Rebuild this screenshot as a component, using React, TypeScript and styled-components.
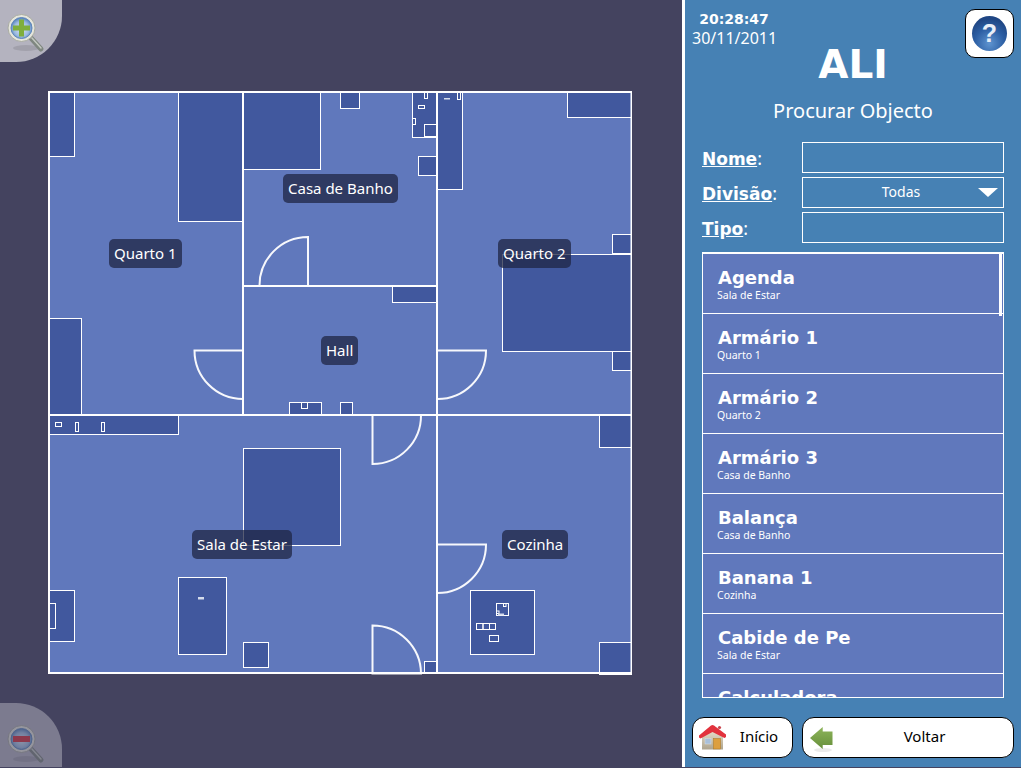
import styled, { createGlobalStyle } from 'styled-components'

const GlobalStyle = createGlobalStyle`
  html, body {
    margin: 0;
    background: #44435f;
    overflow: hidden;
  }
  body {
    font-family: "Noto Sans", "Open Sans", sans-serif;
    color: #fff;
  }
`

const Page = styled.div`
  display: flex;
  width: 1021px;
  height: 767px;
`

const MapArea = styled.main`
  position: relative;
  width: 682px;
  flex-shrink: 0;
`

const PlanSvg = styled.svg`
  display: block;
`

const ZoomTab = styled.button<{ $bottom?: boolean }>`
  position: absolute;
  left: 0;
  ${({ $bottom }) => ($bottom ? 'bottom: 0;' : 'top: 0;')}
  width: 62px;
  height: ${({ $bottom }) => ($bottom ? '64px' : '62px')};
  padding: ${({ $bottom }) => ($bottom ? '17px 0 0 5px' : '3px 0 0 5px')};
  border: 0;
  background: rgba(255, 255, 255, 0.6);
  opacity: ${({ $bottom }) => ($bottom ? 0.5 : 1)};
  ${({ $bottom }) =>
    $bottom ? 'border-top-right-radius: 46px;' : 'border-bottom-right-radius: 46px;'}
  text-align: left;

  svg {
    display: block;
  }
`

const RoomLabel = styled.span<{ $x: number; $y: number }>`
  position: absolute;
  left: ${({ $x }) => $x}px;
  top: ${({ $y }) => $y}px;
  height: 29px;
  padding: 0 5px;
  border-radius: 5px;
  background: rgba(31, 37, 68, 0.75);
  font-size: 15px;
  line-height: 29px;
  white-space: nowrap;
`

const Panel = styled.aside`
  display: flex;
  flex-direction: column;
  flex: 1;
  border-left: 3px solid #fff;
  background: #4681b4;
`

const Header = styled.header`
  display: grid;
  grid-template-columns: 1fr auto 1fr;
  padding: 9px 7px 0;
`

const Clock = styled.div`
  width: 84px;
  padding-top: 2px;
  text-align: center;
`

const Time = styled.div`
  font-family: "DejaVu Sans", sans-serif;
  font-size: 14px;
  font-weight: 700;
  line-height: 17px;
`

const DateText = styled.div`
  font-size: 16px;
  line-height: 20px;
`

const AppName = styled.h1`
  margin: 33px 0 0;
  font-family: "DejaVu Sans", sans-serif;
  font-size: 39px;
  font-weight: 700;
  line-height: 46px;
`

const HelpButton = styled.button`
  justify-self: end;
  display: flex;
  align-items: center;
  justify-content: center;
  width: 49px;
  height: 49px;
  padding: 0;
  border: 1px solid #000;
  border-radius: 10px;
  background: #fff;
`

const Subtitle = styled.h2`
  margin: 10px 0 0;
  height: 26px;
  font-size: 20px;
  font-weight: 400;
  line-height: 26px;
  text-align: center;
`

const Form = styled.form`
  display: grid;
  grid-template-columns: 100px 1fr;
  grid-auto-rows: 31px;
  row-gap: 4px;
  margin: 18px 17px 0;
`

const FieldLabel = styled.label`
  align-self: center;
  font-size: 18px;

  u {
    font-family: "DejaVu Sans", sans-serif;
    font-size: 17px;
    font-weight: 700;
  }
`

const TextField = styled.div`
  border: 1px solid #fff;
`

const SelectField = styled(TextField)`
  position: relative;
  padding-right: 4px;
  font-size: 14px;
  line-height: 27px;
  text-align: center;

  &::after {
    content: '';
    position: absolute;
    right: 5px;
    top: 10px;
    border-left: 10px solid transparent;
    border-right: 10px solid transparent;
    border-top: 9px solid #fff;
  }
`

const List = styled.div`
  position: relative;
  margin: 9px 17px 0;
  height: 443px;
  border: 1px solid #fff;
  border-top-width: 2px;
  background: #6078bc;
  overflow: hidden;
`

const ScrollThumb = styled.div`
  position: absolute;
  top: 0;
  right: 1px;
  width: 3px;
  height: 62px;
  background: #fff;
`

const ListItem = styled.div`
  box-sizing: border-box;
  height: 60px;
  padding: 12px 0 0 15px;
  border-bottom: 1px solid #fff;
`

const ItemName = styled.div`
  font-family: "DejaVu Sans", sans-serif;
  font-size: 18px;
  font-weight: 700;
  line-height: 23px;
`

const ItemRoom = styled.div`
  margin-left: -1px;
  font-size: 10.5px;
  line-height: 13px;
`

const Footer = styled.footer`
  display: flex;
  gap: 9px;
  margin-top: 19px;
  padding: 0 7px;
`

const NavButton = styled.button<{ $wide?: boolean }>`
  display: flex;
  align-items: center;
  box-sizing: border-box;
  ${({ $wide }) => ($wide ? 'flex: 1; padding-left: 7px;' : 'width: 101px; padding-left: 6px;')}
  height: 41px;
  padding-right: 0;
  border: 1px solid #000;
  border-radius: 12px;
  background: #fff;
  color: #000;
  font-family: inherit;
  font-size: 15px;

  span {
    flex: 1;
    padding: 0 0 3px ${({ $wide }) => ($wide ? '3px' : '0')};
    text-align: center;
  }
`

const rooms = [
  { name: 'Quarto 1', x: 109, y: 239 },
  { name: 'Casa de Banho', x: 283, y: 174 },
  { name: 'Hall', x: 321, y: 336 },
  { name: 'Quarto 2', x: 498, y: 239 },
  { name: 'Sala de Estar', x: 192, y: 530 },
  { name: 'Cozinha', x: 502, y: 530 },
]

const objects = [
  { name: 'Agenda', room: 'Sala de Estar' },
  { name: 'Armário 1', room: 'Quarto 1' },
  { name: 'Armário 2', room: 'Quarto 2' },
  { name: 'Armário 3', room: 'Casa de Banho' },
  { name: 'Balança', room: 'Casa de Banho' },
  { name: 'Banana 1', room: 'Cozinha' },
  { name: 'Cabide de Pe', room: 'Sala de Estar' },
  { name: 'Calculadora', room: 'Sala de Estar' },
]

// x, y, width, height of the furniture on the plan
const furniture = [
  [48.5, 91.5, 26, 65],
  [178.5, 91.5, 64.5, 130],
  [243.5, 91.5, 77, 78],
  [340.5, 91.5, 19, 17],
  [412.5, 91.5, 25, 46],
  [424.5, 124.5, 12, 12],
  [418.5, 156.5, 19, 19],
  [437.5, 91.5, 25, 98],
  [567.5, 91.5, 64, 26],
  [612.5, 234.5, 19, 19],
  [502.5, 254.5, 129, 97],
  [612.5, 351.5, 19, 19],
  [392.5, 286.5, 45, 16],
  [289.5, 402.5, 32, 13],
  [340.5, 402.5, 12, 13],
  [48.5, 318.5, 33, 97],
  [48.5, 415.5, 130, 19],
  [243.5, 448.5, 97, 97],
  [178.5, 577.5, 48, 77],
  [243.5, 642.5, 25, 25],
  [48.5, 590.5, 26, 51],
  [599.5, 415.5, 32, 32],
  [599.5, 642.5, 32, 32],
  [470.5, 590.5, 64, 64],
  [424.5, 661.5, 12, 12],
]

const smallParts = [
  [424.5, 92.5, 3, 6],
  [418.5, 105.5, 6, 3],
  [412.5, 118.5, 3, 6],
  [457.5, 92.5, 3, 7],
  [301.5, 402.5, 6, 6],
  [55.5, 422.5, 6, 4],
  [75.5, 422.5, 3, 9],
  [101.5, 422.5, 3, 9],
  [48.5, 603.5, 7, 25],
  [496.5, 603.5, 12, 12],
  [503.5, 603.5, 2.5, 3],
  [496.5, 611, 2.5, 2.5],
  [476.5, 623.5, 6.5, 6],
  [483, 623.5, 6.5, 6],
  [489.5, 623.5, 6, 6],
  [489.5, 635.5, 9, 6],
]

const dashes = [
  [444, 98, 6, 1.5],
  [198, 597, 6, 2.5],
  [498, 613.5, 6, 2],
]

const doors = [
  'M308 286V237A48.5 48.5 0 0 0 259.5 286',
  'M243 350.5H194.5A48.5 48.5 0 0 0 243 399',
  'M437 350.5H486A48.5 48.5 0 0 1 437 399',
  'M372.5 415V464A48.5 48.5 0 0 0 421 415',
  'M437 544.5H486A48.5 48.5 0 0 1 437 593',
  'M372.5 673.5V625.5A48.5 48.5 0 0 1 421 673.5Z',
]

function FloorPlan() {
  return (
    <PlanSvg width={682} height={767} viewBox="0 0 682 767">
      <rect x={49} y={92} width={582} height={581} fill="#6078bc" />
      {furniture.map(([x, y, w, h]) => (
        <rect key={`${x}-${y}`} x={x} y={y} width={w} height={h} fill="#41589e" stroke="#fff" />
      ))}
      {smallParts.map(([x, y, w, h]) => (
        <rect key={`${x}-${y}`} x={x} y={y} width={w} height={h} fill="none" stroke="#fff" />
      ))}
      {dashes.map(([x, y, w, h]) => (
        <rect key={`${x}-${y}`} x={x} y={y} width={w} height={h} fill="#d5dcec" />
      ))}
      {doors.map((d) => (
        <path key={d} d={d} fill="none" stroke="#fff" strokeWidth={2} strokeOpacity={0.95} />
      ))}
      <g stroke="#fff" strokeWidth={2} fill="none">
        <path d="M243 92V415M437 92V673M243 286H437M49 415H631" />
        <path d="M48 92H632M48 673H632M49 91V674" />
        <path d="M631.25 91V674" strokeWidth={1.5} />
      </g>
    </PlanSvg>
  )
}

function MagnifierIcon({ minus }: { minus?: boolean }) {
  const id = minus ? 'lens-minus' : 'lens-plus'
  return (
    <svg width={42} height={44} viewBox="0 0 42 44">
      <defs>
        <radialGradient id={id} cx="50%" cy="55%" r="55%">
          <stop offset="0%" stopColor="#dce6f2" />
          <stop offset="65%" stopColor="#9dbbe0" />
          <stop offset="100%" stopColor="#4f7db8" />
        </radialGradient>
      </defs>
      <ellipse cx={21} cy={37} rx={13} ry={3} fill="#000" opacity={0.1} />
      <path d="M26 27L36 38" stroke="#7f8780" strokeWidth={5} strokeLinecap="round" />
      <path d="M27 27L36 37" stroke="#c3c8c0" strokeWidth={1.5} strokeLinecap="round" />
      <circle cx={16.5} cy={17} r={13.5} fill="#e6e6dc" stroke="#a9aca2" />
      <circle cx={16.5} cy={17} r={10.5} fill={`url(#${id})`} stroke="#5d86bb" />
      {minus ? (
        <rect x={8} y={14} width={17} height={6} fill="#d5303c" />
      ) : (
        <path d="M14 8.5h5v6h6v5h-6v6h-5v-6H8v-5h6z" fill="#7fae3c" />
      )}
    </svg>
  )
}

function HelpIcon() {
  return (
    <svg width={37} height={37} viewBox="0 0 37 37">
      <defs>
        <radialGradient id="help-sphere" cx="50%" cy="78%" r="70%">
          <stop offset="0%" stopColor="#5f94d0" />
          <stop offset="60%" stopColor="#2d5fa4" />
          <stop offset="100%" stopColor="#1f4684" />
        </radialGradient>
      </defs>
      <circle cx={18.5} cy={18.5} r={17.5} fill="url(#help-sphere)" />
      <text
        x={18.5}
        y={27}
        fill="#e8eef8"
        fontFamily="Liberation Sans, sans-serif"
        fontSize={25}
        fontWeight={700}
        textAnchor="middle"
      >
        ?
      </text>
    </svg>
  )
}

function HouseIcon() {
  return (
    <svg width={27} height={27} viewBox="0 0 27 27">
      <defs>
        <linearGradient id="house-wall" x1="0" y1="0" x2="0" y2="1">
          <stop offset="0%" stopColor="#efe6d2" />
          <stop offset="100%" stopColor="#ada48f" />
        </linearGradient>
      </defs>
      <path d="M3 11L13.5 4L24 11V25.5H3z" fill="url(#house-wall)" />
      <rect x={6} y={14.5} width={6} height={5.5} fill="#a9c0da" stroke="#d8e0e8" strokeWidth={0.5} />
      <rect x={14.5} y={14.5} width={7} height={10.5} fill="#dc9f3f" stroke="#a97722" strokeWidth={0.5} />
      <circle cx={20.5} cy={3.5} r={1.6} fill="#c9444c" />
      <path d="M0 11.5L12 1.5Q13.5 0.5 15 1.5L27 10.5V13L25.5 14L13.5 8L1.5 14.5L0 13.5z" fill="#e2323d" />
    </svg>
  )
}

function BackIcon() {
  return (
    <svg width={23} height={28} viewBox="0 0 23 28">
      <defs>
        <linearGradient id="back-arrow" x1="0" y1="0" x2="0" y2="1">
          <stop offset="0%" stopColor="#8db45a" />
          <stop offset="100%" stopColor="#668f3b" />
        </linearGradient>
      </defs>
      <ellipse cx={13} cy={26} rx={9} ry={2} fill="#000" opacity={0.08} />
      <path d="M0 14L12.7 3V7.5H22.5V21H12.7V25z" fill="url(#back-arrow)" />
    </svg>
  )
}

export default function App() {
  return (
    <>
      <GlobalStyle />
      <Page>
        <MapArea>
          <FloorPlan />
          {rooms.map((room) => (
            <RoomLabel key={room.name} $x={room.x} $y={room.y}>
              {room.name}
            </RoomLabel>
          ))}
          <ZoomTab aria-label="Aumentar">
            <MagnifierIcon />
          </ZoomTab>
          <ZoomTab $bottom aria-label="Diminuir">
            <MagnifierIcon minus />
          </ZoomTab>
        </MapArea>

        <Panel>
          <Header>
            <Clock>
              <Time>20:28:47</Time>
              <DateText>30/11/2011</DateText>
            </Clock>
            <AppName>ALI</AppName>
            <HelpButton aria-label="Ajuda">
              <HelpIcon />
            </HelpButton>
          </Header>
          <Subtitle>Procurar Objecto</Subtitle>

          <Form>
            <FieldLabel>
              <u>Nome</u>:
            </FieldLabel>
            <TextField />
            <FieldLabel>
              <u>Divisão</u>:
            </FieldLabel>
            <SelectField>Todas</SelectField>
            <FieldLabel>
              <u>Tipo</u>:
            </FieldLabel>
            <TextField />
          </Form>

          <List>
            {objects.map((item) => (
              <ListItem key={item.name}>
                <ItemName>{item.name}</ItemName>
                <ItemRoom>{item.room}</ItemRoom>
              </ListItem>
            ))}
            <ScrollThumb />
          </List>

          <Footer>
            <NavButton>
              <HouseIcon />
              <span>Início</span>
            </NavButton>
            <NavButton $wide>
              <BackIcon />
              <span>Voltar</span>
            </NavButton>
          </Footer>
        </Panel>
      </Page>
    </>
  )
}
